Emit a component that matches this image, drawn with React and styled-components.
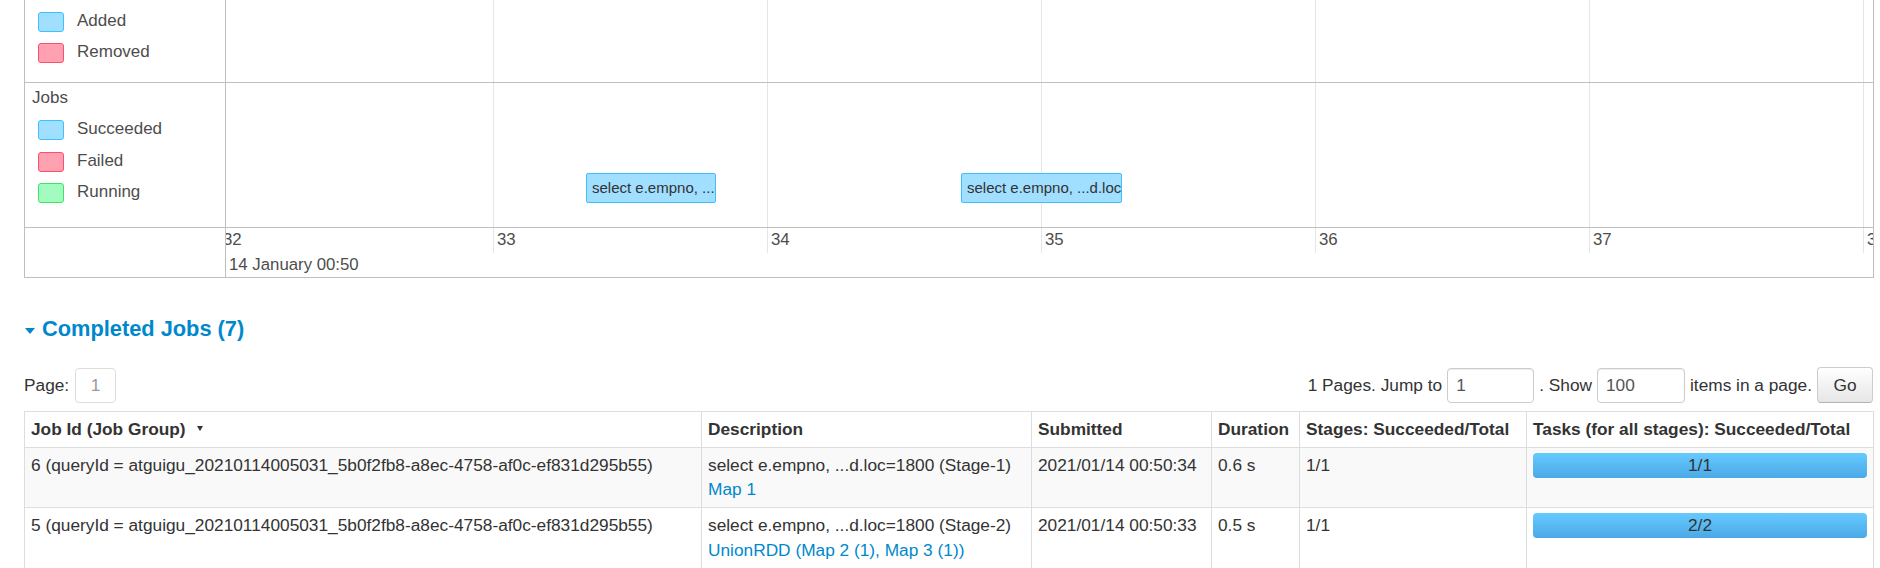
import React from "react";
import styled, { createGlobalStyle } from "styled-components";

const GlobalStyle = createGlobalStyle`
  html, body {
    margin: 0;
    padding: 0;
    background: #fff;
    overflow: hidden;
  }
  body {
    font-family: "Liberation Sans", Arial, sans-serif;
    color: #333;
  }
`;

const Page = styled.div`
  width: 1849px;
  padding-left: 24px;
`;

// ---- timeline ----

const Timeline = styled.div`
  box-sizing: border-box;
  width: 1850px;
  border: 1px solid #bfbfbf;
  border-top: none;
`;

const GroupRow = styled.div`
  box-sizing: border-box;
  display: grid;
  grid-template-columns: 201px 1fr;
  height: ${(p) => p.$height}px;
  border-bottom: ${(p) => (p.$last ? "none" : "1px solid #bfbfbf")};
`;

const GroupLabel = styled.div`
  box-sizing: border-box;
  border-right: 1px solid #bfbfbf;
  padding: ${(p) => p.$padTop}px 0 0 7px;
  color: #4d4d4d;
  font-size: 17px;
  line-height: 19.5px;
`;

const GroupTitle = styled.div`
  margin-bottom: 13px;
`;

const LegendList = styled.div`
  display: flex;
  flex-direction: column;
  gap: 11.5px;
  margin-left: 6px;
`;

const LegendItem = styled.div`
  display: flex;
  align-items: center;
  height: 20px;
`;

const Swatch = styled.span`
  box-sizing: border-box;
  width: 26px;
  height: 20px;
  border-radius: 3px;
  border: 1px solid ${(p) => p.$stroke};
  background: ${(p) => p.$fill};
`;

const LegendText = styled.span`
  margin-left: 13px;
  padding-bottom: 2px;
`;

const Canvas = styled.div`
  position: relative;
  overflow: hidden;
  background-image: linear-gradient(to right, #e5e5e5 0, #e5e5e5 1px, transparent 1px);
  background-size: 274px ${(p) => p.$gridHeight || "100%"};
  background-position: 267px 0;
  background-repeat: repeat-x;
`;

const JobItem = styled.div`
  position: absolute;
  top: 90px;
  left: ${(p) => p.$left}px;
  width: ${(p) => p.$width}px;
  height: 30px;
  box-sizing: border-box;
  padding: 0 5px;
  border: 1px solid #3ec0ff;
  border-radius: 2px;
  background: #a0dfff;
  color: #333;
  font-size: 15px;
  line-height: 28px;
  white-space: nowrap;
  overflow: hidden;
`;

const TickLabel = styled.span`
  position: absolute;
  top: 1.5px;
  left: ${(p) => p.$left}px;
  font-size: 16.8px;
  line-height: 19.3px;
  color: #4d4d4d;
`;

const MajorLabel = styled.span`
  position: absolute;
  top: 27px;
  left: 3px;
  font-size: 16.8px;
  line-height: 19.3px;
  color: #4d4d4d;
`;

// ---- completed jobs section ----

const SectionTitle = styled.h4`
  display: flex;
  align-items: center;
  margin: 39px 0 0;
  height: 24px;
  font-size: 21.8px;
  line-height: 24px;
  font-weight: bold;
  color: #0088cc;
`;

const Arrow = styled.span`
  width: 0;
  height: 0;
  margin: 4px 7px 0 1px;
  border-left: 5.5px solid transparent;
  border-right: 5.5px solid transparent;
  border-top: 6px solid #0088cc;
`;

const PagerRow = styled.div`
  display: flex;
  justify-content: space-between;
  align-items: center;
  margin-top: 26px;
  height: 36px;
  font-size: 17.3px;
  line-height: 24.7px;
  color: #333;
`;

const PagerGroup = styled.div`
  display: flex;
  align-items: center;
  gap: ${(p) => p.$gap || 5}px;
`;

const PageBox = styled.span`
  box-sizing: border-box;
  display: flex;
  align-items: center;
  justify-content: center;
  width: 41px;
  height: 35px;
  border: 1px solid #ddd;
  border-radius: 4px;
  color: #999;
`;

const PagerInput = styled.input`
  box-sizing: border-box;
  width: ${(p) => p.$width}px;
  height: 35px;
  padding: 0 8px;
  border: 1px solid #ccc;
  border-radius: 4px;
  box-shadow: inset 0 1px 1px rgba(0, 0, 0, 0.075);
  font-family: inherit;
  font-size: 17.3px;
  color: #555;
  background: #fff;
  outline: none;
`;

const GoButton = styled.button`
  box-sizing: border-box;
  width: 56px;
  height: 36px;
  padding: 0;
  border: 1px solid #ccc;
  border-bottom-color: #b3b3b3;
  border-radius: 4px;
  background-image: linear-gradient(to bottom, #ffffff, #e6e6e6);
  font-family: inherit;
  font-size: 17.3px;
  color: #333;
`;

const Table = styled.table`
  width: 1849px;
  margin-top: 8px;
  border-collapse: collapse;
  table-layout: fixed;
  font-size: 17.3px;
  line-height: 24.7px;
  color: #333;
`;

const Th = styled.th`
  padding: 5px 6px;
  border: 1px solid #ddd;
  text-align: left;
  font-weight: bold;
  white-space: nowrap;
  vertical-align: bottom;
`;

const SortMark = styled.span`
  display: inline-block;
  width: 0;
  height: 0;
  margin-left: 11px;
  vertical-align: 4px;
  border-left: 3px solid transparent;
  border-right: 3px solid transparent;
  border-top: 5px solid #333;
`;

const Tr = styled.tr`
  background: ${(p) => (p.$striped ? "#f9f9f9" : "#fff")};
`;

const Td = styled.td`
  padding: 5px 6px;
  border: 1px solid #ddd;
  vertical-align: top;
  white-space: nowrap;
`;

const StageLink = styled.a`
  display: block;
  color: #0088cc;
  text-decoration: none;
`;

const Progress = styled.div`
  position: relative;
  height: 25px;
  border-radius: 4px;
  background: #f5f5f5;
  overflow: hidden;
`;

const ProgressFill = styled.div`
  height: 100%;
  background-image: linear-gradient(to bottom, #66caff, #4aa9e6);
`;

const ProgressLabel = styled.span`
  position: absolute;
  left: 0;
  right: 0;
  top: 0;
  text-align: center;
  line-height: 25px;
  color: #333;
`;

const BLUE = { fill: "#a0dfff", stroke: "#3ec0ff" };
const RED = { fill: "#ffa1b0", stroke: "#ff4d6d" };
const GREEN = { fill: "#a2fcc0", stroke: "#3ee36a" };

const ticks = [32, 33, 34, 35, 36, 37, 38];

const jobBars = [
  { left: 360, width: 130, text: "select e.empno, ...d.loc=1800 (Job 6)" },
  { left: 735, width: 161, text: "select e.empno, ...d.loc=1800 (Job 5)" },
];

const columns = [
  { title: "Job Id (Job Group)", width: 677, sorted: true },
  { title: "Description", width: 330 },
  { title: "Submitted", width: 180 },
  { title: "Duration", width: 88 },
  { title: "Stages: Succeeded/Total", width: 227 },
  { title: "Tasks (for all stages): Succeeded/Total", width: 347 },
];

const jobs = [
  {
    id: "6 (queryId = atguigu_20210114005031_5b0f2fb8-a8ec-4758-af0c-ef831d295b55)",
    desc: "select e.empno, ...d.loc=1800 (Stage-1)",
    link: "Map 1",
    submitted: "2021/01/14 00:50:34",
    duration: "0.6 s",
    stages: "1/1",
    done: 1,
    total: 1,
  },
  {
    id: "5 (queryId = atguigu_20210114005031_5b0f2fb8-a8ec-4758-af0c-ef831d295b55)",
    desc: "select e.empno, ...d.loc=1800 (Stage-2)",
    link: "UnionRDD (Map 2 (1), Map 3 (1))",
    submitted: "2021/01/14 00:50:33",
    duration: "0.5 s",
    stages: "1/1",
    done: 2,
    total: 2,
  },
];

const Legend = ({ items }) => (
  <LegendList>
    {items.map((it) => (
      <LegendItem key={it.label}>
        <Swatch $fill={it.color.fill} $stroke={it.color.stroke} />
        <LegendText>{it.label}</LegendText>
      </LegendItem>
    ))}
  </LegendList>
);

const JobTimeline = () => (
  <Timeline>
    <GroupRow $height={83}>
      <GroupLabel $padTop={11.5}>
        <Legend
          items={[
            { label: "Added", color: BLUE },
            { label: "Removed", color: RED },
          ]}
        />
      </GroupLabel>
      <Canvas />
    </GroupRow>
    <GroupRow $height={145}>
      <GroupLabel $padTop={4.5}>
        <GroupTitle>Jobs</GroupTitle>
        <Legend
          items={[
            { label: "Succeeded", color: BLUE },
            { label: "Failed", color: RED },
            { label: "Running", color: GREEN },
          ]}
        />
      </GroupLabel>
      <Canvas>
        {jobBars.map((b) => (
          <JobItem key={b.left} $left={b.left} $width={b.width}>
            {b.text}
          </JobItem>
        ))}
      </Canvas>
    </GroupRow>
    <GroupRow $height={49} $last>
      <GroupLabel $padTop={0} />
      <Canvas $gridHeight="25px">
        {ticks.map((t, i) => (
          <TickLabel key={t} $left={-3 + i * 274}>
            {t}
          </TickLabel>
        ))}
        <MajorLabel>14 January 00:50</MajorLabel>
      </Canvas>
    </GroupRow>
  </Timeline>
);

export default function App() {
  return (
    <Page>
      <GlobalStyle />
      <JobTimeline />

      <SectionTitle>
        <Arrow />
        Completed Jobs (7)
      </SectionTitle>

      <PagerRow>
        <PagerGroup $gap={6}>
          <span>Page:</span>
          <PageBox>1</PageBox>
        </PagerGroup>
        <PagerGroup>
          <span>1 Pages. Jump to</span>
          <PagerInput $width={87} defaultValue="1" />
          <span>. Show</span>
          <PagerInput $width={88} defaultValue="100" />
          <span>items in a page.</span>
          <GoButton>Go</GoButton>
        </PagerGroup>
      </PagerRow>

      <Table>
        <colgroup>
          {columns.map((c) => (
            <col key={c.title} style={{ width: c.width }} />
          ))}
        </colgroup>
        <thead>
          <tr>
            {columns.map((c) => (
              <Th key={c.title}>
                {c.title}
                {c.sorted && <SortMark />}
              </Th>
            ))}
          </tr>
        </thead>
        <tbody>
          {jobs.map((j, i) => (
            <Tr key={j.id} $striped={i % 2 === 0}>
              <Td>{j.id}</Td>
              <Td>
                {j.desc}
                <StageLink href="#">{j.link}</StageLink>
              </Td>
              <Td>{j.submitted}</Td>
              <Td>{j.duration}</Td>
              <Td>{j.stages}</Td>
              <Td>
                <Progress>
                  <ProgressLabel>
                    {j.done}/{j.total}
                  </ProgressLabel>
                  <ProgressFill style={{ width: `${(j.done / j.total) * 100}%` }} />
                </Progress>
              </Td>
            </Tr>
          ))}
        </tbody>
      </Table>
    </Page>
  );
}
